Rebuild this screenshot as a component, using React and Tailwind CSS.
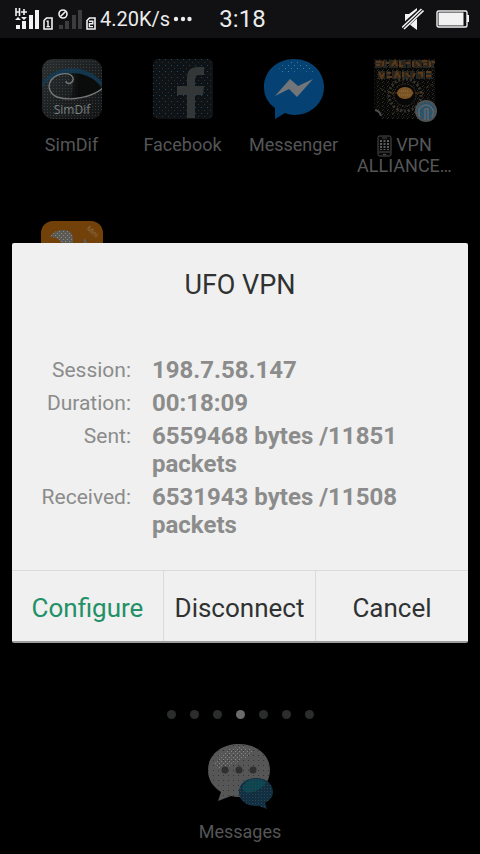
import { useState } from "react"

const session = [
  { label: "Session:", value: "198.7.58.147" },
  { label: "Duration:", value: "00:18:09" },
  { label: "Sent:", value: "6559468 bytes /11851 packets" },
  { label: "Received:", value: "6531943 bytes /11508 packets" },
]

const pages = [0, 1, 2, 3, 4, 5, 6]

function SignalIcon({ weak }) {
  return (
    <svg width="26" height="22" viewBox="0 0 26 22" fill={weak ? "#3c3c3e" : "#f2f2f2"} aria-hidden="true">
      {weak ? (
        <>
          <circle cx="5" cy="6" r="4" fill="none" stroke="#f2f2f2" strokeWidth="1.6" />
          <path d="M2.5 8.5l5-5" stroke="#f2f2f2" strokeWidth="1.6" />
        </>
      ) : (
        <g>
          <path d="M1 0v8M4.500 0v8M1 4h3M6 4h6M9 1v6" stroke="#f2f2f2" strokeWidth="1.6" fill="none" />
          <path d="M0 12l3-3 3 3zM6 9h6l-3 3z" />
        </g>
      )}
      <rect x="1" y="17" width="4" height="4" />
      <rect x="7" y="13" width="4" height="8" />
      <rect x="14" y="7" width="4" height="14" />
      <rect x="20" y="2" width="4" height="19" />
    </svg>
  )
}

function SimIcon({ second }) {
  return (
    <svg width="10" height="13" viewBox="0 0 10 13" aria-hidden="true">
      <path d="M3.5 1H9v11H1V3.5z" fill="none" stroke="#f2f2f2" strokeWidth="1.6" />
      {second ? (
        <path d="M3 4.200h3.800v2.600H3.400v2.800H7" fill="none" stroke="#f2f2f2" strokeWidth="1.4" />
      ) : (
        <path d="M3.5 4.2H5V10M3.5 9.6h3.4" fill="none" stroke="#f2f2f2" strokeWidth="1.4" />
      )}
    </svg>
  )
}

function StatusBar() {
  return (
    <header className="grid h-[38px] grid-cols-[1fr_auto_1fr] items-center bg-[#111113] pr-[10px] pl-[15px] text-[#ececec]">
      <div className="flex items-center gap-[2px] whitespace-nowrap">
        <SignalIcon />
        <div className="pt-2">
          <SimIcon />
        </div>
        <div className="flex items-center gap-[2px] pl-[3px]">
          <SignalIcon weak />
          <div className="pt-2">
            <SimIcon second />
          </div>
        </div>
        <span className="pl-[2px] text-[20px] leading-6">4.20K/s</span>
        <svg width="20" height="6" viewBox="0 0 20 6" fill="#ececec" aria-hidden="true">
          <circle cx="4" cy="3" r="2.2" />
          <circle cx="11" cy="3" r="2.2" />
          <circle cx="17.500" cy="3" r="2.2" />
        </svg>
      </div>
      <time className="text-2xl leading-6">3:18</time>
      <div className="flex items-center justify-end gap-3">
        <svg width="22" height="22" viewBox="0 0 22 22" fill="#f2f2f2" aria-label="Muted">
          <path d="M3 6h4l8-6v22l-8-6H3z" />
          <path d="M-1 21L22 0" stroke="#111113" strokeWidth="6" />
          <path d="M0 19.5L19.5 1M2 21L21.5 2.5" stroke="#f2f2f2" strokeWidth="1.6" />
        </svg>
        <svg width="34" height="18" viewBox="0 0 34 18" aria-label="Battery">
          <rect x="1" y="1" width="30" height="16" rx="1.5" fill="none" stroke="#f2f2f2" strokeWidth="1.4" />
          <rect x="2.5" y="2.5" width="25" height="13" fill="#f2f2f2" />
          <rect x="31" y="5" width="2" height="7" fill="#f2f2f2" />
        </svg>
      </div>
    </header>
  )
}

function SimDifIcon() {
  return (
    <svg width="62" height="62" viewBox="0 0 62 62" aria-hidden="true">
      <defs>
        <linearGradient id="simdif" x1="0" y1="0" x2="1" y2="1">
          <stop offset="0" stopColor="#2c3031" />
          <stop offset="0.5" stopColor="#1d2021" />
          <stop offset="1" stopColor="#111314" />
        </linearGradient>
        <linearGradient id="simdif-shade" x1="0" y1="0" x2="1" y2="0">
          <stop offset="0" stopColor="#0a0b0b" stopOpacity="0" />
          <stop offset="0.4" stopColor="#0a0b0b" />
        </linearGradient>
        <pattern id="grain" width="3" height="3" patternUnits="userSpaceOnUse">
          <rect width="1" height="1" fill="#565b5c" opacity="0.5" />
        </pattern>
        <clipPath id="simdif-tile">
          <rect x="1" y="1" width="60" height="60" rx="11" />
        </clipPath>
      </defs>
      <g clipPath="url(#simdif-tile)">
        <rect width="62" height="62" fill="url(#simdif)" />
        <rect width="62" height="62" fill="url(#grain)" />
        <path d="M24 16C44 12 56 22 60 31C52 38 42 41 28 41C34 32 34 20 24 16z" fill="url(#simdif-shade)" />
        <path d="M0 27C12 5 46 5 62 25V30C46 10 14 10 0 31z" fill="#123e5c" opacity="0.75" />
        <path
          d="M25 23C26 28 33 25 32 20C30 14 18 14 11 21C5 28 9 36 16 39C32 44 52 38 62 30"
          fill="none"
          stroke="#74787a"
          strokeWidth="1.4"
        />
      </g>
      <text x="31" y="56" textAnchor="middle" fontSize="12" fontFamily="Open Sans, sans-serif" fill="#7c8081">
        SimDif
      </text>
    </svg>
  )
}

function FacebookIcon() {
  return (
    <svg width="62" height="62" viewBox="0 0 62 62" aria-hidden="true">
      <defs>
        <pattern id="fb-dots" width="6" height="6" patternUnits="userSpaceOnUse">
          <rect x="1" y="1" width="1" height="1" fill="#1d4a66" />
          <rect x="4" y="4" width="1" height="1" fill="#26323a" />
        </pattern>
      </defs>
      <rect x="1" y="1" width="60" height="60" rx="5" fill="#101315" />
      <rect x="1" y="1" width="60" height="60" rx="5" fill="url(#fb-dots)" />
      <path d="M35 60V37H25V28H35V20Q35 9 46 9H52V17H47Q43 17 43 21V28H52L51 37H43V60z" fill="#333738" />
    </svg>
  )
}

function MessengerIcon() {
  return (
    <svg width="62" height="62" viewBox="0 0 62 62" aria-hidden="true">
      <defs>
        <pattern id="ms-dots" width="6" height="6" patternUnits="userSpaceOnUse">
          <rect x="1" y="1" width="1" height="1" fill="#3c8290" />
          <rect x="4" y="4" width="1" height="1" fill="#3c8290" />
        </pattern>
      </defs>
      <path
        d="M31 1C14 1 1 13 1 29C1 38 5 45 12 50V61L22 55Q27 57 31 57C48 57 61 45 61 29C61 13 48 1 31 1z"
        fill="#054273"
      />
      <path d="M12 17Q20 3 31 3Q44 3 51 15L40 13L28 14z" fill="url(#ms-dots)" />
      <path d="M12 38L27 21L35 28L50 21L34 39L26 31z" fill="#727679" />
    </svg>
  )
}

function AllianceIcon() {
  return (
    <svg width="66" height="66" viewBox="0 0 66 66" aria-hidden="true">
      <defs>
        <pattern id="al-grain" width="5" height="4" patternUnits="userSpaceOnUse">
          <rect x="0" y="0" width="1" height="1" fill="#44453c" />
          <rect x="2" y="1" width="1" height="1" fill="#2a2a22" />
          <rect x="1" y="3" width="1" height="1" fill="#3c3320" />
          <rect x="4" y="2" width="1" height="1" fill="#1c1c1a" />
        </pattern>
        <pattern id="al-blue" width="4" height="4" patternUnits="userSpaceOnUse">
          <rect width="4" height="4" fill="#3d525e" />
          <rect width="2" height="2" fill="#1c5377" />
          <rect x="2" y="2" width="2" height="2" fill="#1f5878" />
        </pattern>
      </defs>
      <path d="M2 1H63V61H10Q9 52 2 50z" fill="#070707" />
      <path d="M2 1H63V61H10Q9 52 2 50z" fill="url(#al-grain)" opacity="0.7" />
      <g fill="none" stroke="#282620" strokeWidth="8">
        <path d="M3 6h59M6 17h54" strokeDasharray="7 1 4 2 9 1" />
      </g>
      <g fill="none" stroke="#5a3717" strokeWidth="2">
        <path d="M4 4h5M4 7h4M11 3v5M14 5h3M20 8l3-5 2 5M28 3v5h3M34 5h4M41 3v6M44 4l4 4M50 3h5M51 6h4M58 3v6M60 4h3" />
        <path d="M7 14l3 6 2-5M15 15h4M15 19h5M23 20l2-6 3 6M31 14v5M34 15l4 4M41 19l2-4M46 15h4v4M54 14h5M54 18h5" />
      </g>
      <circle cx="33" cy="37" r="16" fill="none" stroke="#35332a" strokeWidth="3" strokeDasharray="2 2" />
      <circle cx="33" cy="37" r="11" fill="#070707" stroke="#3d392e" strokeDasharray="2 1" />
      <path d="M18 35h34" stroke="#5a3d19" strokeDasharray="4 1" />
      <ellipse cx="33" cy="35" rx="8" ry="6" fill="#7b5425" />
      <path d="M27 37h12M29 33h8" stroke="#94733f" strokeDasharray="1 1" />
      <path d="M20 56l9-5M42 54l5 4M8 30l6 4M54 30l7-4" stroke="#44371f" strokeDasharray="3 2" />
      <path d="M3 52q5 1 6 6" fill="none" stroke="#4a4b4b" strokeWidth="2" />
      <circle cx="54" cy="53" r="11" fill="#4e5356" />
      <circle cx="54" cy="53" r="9" fill="url(#al-blue)" />
      <path d="M48 59q-3-7 1-10q5-4 10 0q4 4 1 10M53 62V51h3v11" fill="none" stroke="#5f676b" strokeWidth="1.5" />
    </svg>
  )
}

function MiniIcon() {
  return (
    <svg width="62" height="62" viewBox="0 0 62 62" aria-hidden="true">
      <defs>
        <pattern id="uc-dots" width="4" height="4" patternUnits="userSpaceOnUse">
          <rect width="1" height="1" fill="#8c8a84" />
          <rect x="2" y="2" width="1" height="1" fill="#8c8a84" />
        </pattern>
      </defs>
      <rect width="62" height="62" rx="12" fill="#724109" />
      <path d="M9 16Q13 9 22 9Q32 9 32 18V30H24Q20 15 9 16z" fill="#5b5a55" />
      <path d="M9 16Q13 9 22 9Q32 9 32 18V30H24Q20 15 9 16z" fill="url(#uc-dots)" />
      <path d="M42 24q1-4 1-7q2 1 3 5v6h-4z" fill="#5b5a55" />
      <text
        x="45"
        y="8"
        fontSize="7"
        fontFamily="Roboto, sans-serif"
        fill="#8a6c45"
        transform="rotate(42 45 8)"
      >
        Mini
      </text>
    </svg>
  )
}

function PhoneGlyph() {
  return (
    <svg className="-my-1 mr-1 inline-block align-middle" width="15" height="22" viewBox="0 0 15 22" aria-hidden="true">
      <rect x="1" y="1" width="13" height="20" rx="1.5" fill="#090909" stroke="#4c4c4c" />
      <path d="M4 5v10M7.500 5v10M11 5v10" stroke="#5c5c5c" strokeWidth="2" strokeDasharray="2 1" />
      <path d="M5 3h5M2 17h11M6 19.500h3" stroke="#4c4c4c" />
    </svg>
  )
}

function MessagesIcon() {
  return (
    <svg width="66" height="68" viewBox="0 0 66 68" aria-hidden="true">
      <defs>
        <pattern id="mg-light" width="4" height="4" patternUnits="userSpaceOnUse">
          <rect width="1" height="1" fill="#858585" />
          <rect x="2" y="2" width="1" height="1" fill="#858585" />
        </pattern>
        <pattern id="mg-dark" width="5" height="5" patternUnits="userSpaceOnUse">
          <rect x="1" y="2" width="1" height="1" fill="#333" />
        </pattern>
        <pattern id="mg-blue" width="3" height="3" patternUnits="userSpaceOnUse">
          <rect width="1" height="1" fill="#374248" />
        </pattern>
      </defs>
      <path
        d="M32 1C14 1 1 12 1 27C1 36 5 43 14 49L11 58L24 53Q28 54 32 54C50 54 63 42 63 27C63 12 50 1 32 1z"
        fill="#565657"
      />
      <path
        d="M32 1C14 1 1 12 1 27C1 36 5 43 14 49L11 58L24 53Q28 54 32 54C50 54 63 42 63 27C63 12 50 1 32 1z"
        fill="url(#mg-dark)"
      />
      <path d="M7 22Q12 6 32 4Q44 4 46 8Q34 22 10 26z" fill="url(#mg-light)" />
      <g fill="#2f2f30">
        <circle cx="18" cy="27" r="3.500" />
        <circle cx="32" cy="27" r="3.500" />
        <circle cx="46" cy="27" r="3.500" />
      </g>
      <path d="M49 35C39 35 32 41 32 49C32 57 39 63 49 63H52L60 66L58 60C63 57 66 54 66 49C66 41 59 35 49 35z" fill="#102f42" />
      <path d="M35 46Q37 36 49 36Q56 36 59 40Q52 49 40 50z" fill="#0c5058" opacity="0.7" />
      <path
        d="M49 35C39 35 32 41 32 49C32 57 39 63 49 63H52L60 66L58 60C63 57 66 54 66 49C66 41 59 35 49 35z"
        fill="url(#mg-blue)"
      />
    </svg>
  )
}

function AppTile({ icon, children }) {
  return (
    <button type="button" className="flex flex-col items-center gap-[13px] text-lg leading-[21px] text-[#555657]">
      <span className="flex h-[63px] items-start">{icon}</span>
      <span>{children}</span>
    </button>
  )
}

function VpnDialog({ onClose }) {
  return (
    <div className="absolute inset-x-0 top-[38px] bottom-0 flex items-center px-3 pb-[7px]">
      <section
        role="dialog"
        aria-labelledby="vpn-title"
        className="w-full rounded-[2px] border-b-2 border-[#9c9d9d] bg-[#f0f0f0] text-[#2f3231]"
      >
        <h1 id="vpn-title" className="pt-[26px] text-center text-[27px] leading-8">
          UFO VPN
        </h1>
        <div className="pt-[55px] pb-[26px]">
          <table className="w-full text-left text-[#8b8c8b]">
            <tbody>
              {session.map((row) => (
                <tr key={row.label} className="align-top">
                  <th scope="row" className="w-[119px] text-right text-[21px] leading-7 font-normal">
                    {row.label}
                  </th>
                  <td className="pr-14 pb-[5px] pl-[21px] text-2xl leading-7 font-bold">{row.value}</td>
                </tr>
              ))}
            </tbody>
          </table>
        </div>
        <div className="grid grid-cols-3 divide-x divide-[#d9dada] border-t border-[#d9dada] text-[26px] leading-8">
          <button type="button" className="h-[70px] pt-1 text-[#239067]">
            Configure
          </button>
          <button type="button" onClick={onClose} className="h-[70px] pt-1">
            Disconnect
          </button>
          <button type="button" onClick={onClose} className="h-[70px] pt-1">
            Cancel
          </button>
        </div>
      </section>
    </div>
  )
}

export default function App() {
  const [open, setOpen] = useState(true)

  return (
    <div className="relative flex min-h-screen flex-col bg-black font-['Roboto',sans-serif]">
      <StatusBar />

      <main className="grid grid-cols-4 items-start gap-y-[45px] pt-5 pr-5 pl-4">
        <AppTile icon={<SimDifIcon />}>SimDif</AppTile>
        <AppTile icon={<FacebookIcon />}>Facebook</AppTile>
        <AppTile icon={<MessengerIcon />}>Messenger</AppTile>
        <AppTile icon={<AllianceIcon />}>
          <PhoneGlyph />
          VPN
          <br />
          ALLIANCE…
        </AppTile>
        <AppTile icon={<MiniIcon />} />
      </main>

      <footer className="mt-auto flex flex-col items-center gap-6 pb-3">
        <div className="flex gap-[14px]">
          {pages.map((page) => (
            <span
              key={page}
              className={page === 3 ? "size-[9px] rounded-full bg-[#6a6b6b]" : "size-[9px] rounded-full bg-[#2b2c2c]"}
            />
          ))}
        </div>
        <button type="button" className="flex flex-col items-center gap-[10px] text-lg leading-[21px] text-[#555657]">
          <MessagesIcon />
          Messages
        </button>
      </footer>

      {open && <VpnDialog onClose={() => setOpen(false)} />}
    </div>
  )
}
